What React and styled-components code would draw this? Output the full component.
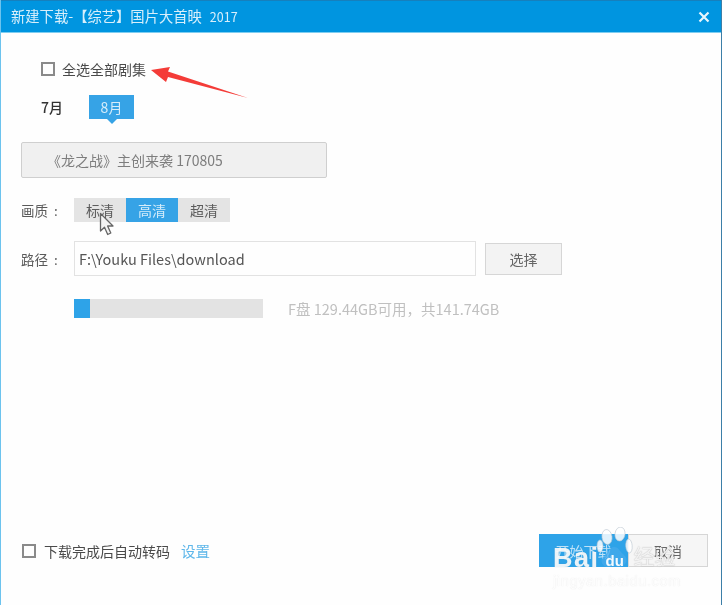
import React from "react";
import styled, { createGlobalStyle } from "styled-components";

const Global = createGlobalStyle`
  html, body { margin: 0; padding: 0; background: #fff; }
  body { font-family: "Noto Sans CJK SC", "Noto Sans", sans-serif; line-height: 18px; }
  * { box-sizing: border-box; }
`;
const Win = styled.div`
  position: relative; width: 722px; height: 605px; background: #fefefe;
  display: flex; flex-direction: column; overflow: hidden;
  border-left: 1px solid #6cc3ee; border-right: 1px solid #3c7fa8;
`;
const TitleBar = styled.div`
  height: 33px; flex: none; margin: 0 -1px; padding: 0 12px 0 11px; display: flex; align-items: center; justify-content: space-between;
  background: #0095e0; border-top: 1px solid #1680bd; border-bottom: 1px solid #7fcdf0;
  color: #d8effb; font-size: 14.3px; filter: blur(.4px);
`;
const Year = styled.span` margin-left: 8px; font-size: 12.5px; `;
const Close = styled.svg` width: 12px; height: 12px; `;
const Body = styled.div`
  flex: 1; display: flex; flex-direction: column; padding: 27px 13px 0 20px; filter: blur(.45px);
`;
const CheckRow = styled.div`
  display: flex; align-items: center; color: #4a4a4a; font-size: 14px; margin-left: ${p => p.$left}px;
`;
const Box = styled.span`
  width: 14px; height: 14px; border: 2px solid #8a8a8a; margin-right: ${p => p.$gap}px; flex: none;
`;
const Months = styled.div` display: flex; align-items: center; margin: 17px 0 0 20px; height: 24px; `;
const Month = styled.span` width: 48px; font-size: 14px; color: #333; font-weight: 500; `;
const MonthTab = styled.span`
  position: relative; width: 45px; height: 24px; background: #36a3e6; color: #d5ecfa; font-size: 14px;
  display: flex; align-items: center; justify-content: center;
  &::after { content: ""; position: absolute; left: 18px; bottom: -5px; border: 5px solid transparent; border-bottom: 0; border-top-color: #36a3e6; }
`;
const Episode = styled.div`
  width: 306px; height: 36px; margin-top: 23px; padding-left: 25px; display: flex; align-items: center;
  background: #f0f0f0; border: 1px solid #cfcfcf; border-radius: 2px; color: #7d7d7d; font-size: 14px;
`;
const Row = styled.div` display: flex; align-items: center; margin-top: ${p => p.$top}px; `;
const Label = styled.span` width: 53px; flex: none; display: flex; color: #5a5a5a; font-size: 13.5px; `;
const Colon = styled.span` margin-left: 6px; `;
const Seg = styled.span`
  width: 52px; height: 24px; display: flex; align-items: center; justify-content: center; font-size: 14px;
  background: ${p => p.$on ? "#36a3e6" : "#e4e4e4"}; color: ${p => p.$on ? "#d5ecfa" : "#5c5c5c"};
`;
const PathInput = styled.div`
  width: 402px; height: 35px; padding-left: 4px; display: flex; align-items: center;
  border: 1px solid #e2e2e2; color: #555; font-size: 14.5px;
`;
const Choose = styled.div`
  width: 77px; height: 32px; margin-left: 9px; display: flex; align-items: center; justify-content: center;
  background: #f3f3f3; border: 1px solid #d6d6d6; color: #666; font-size: 14px;
`;
const Track = styled.div` width: 189px; height: 19px; margin-left: 53px; background: #e3e3e3; `;
const Fill = styled.div` height: 100%; background: #2ea3e8; `;
const Disk = styled.span` margin-left: 25px; color: #c0c0c0; font-size: 14.5px; `;
const Spacer = styled.div` flex: 1; `;
const Footer = styled.div` display: flex; align-items: center; justify-content: space-between; margin-bottom: 38px; `;
const Link = styled.span` margin-left: 11px; color: #5fb7ea; font-size: 14.5px; `;
const Actions = styled.div` display: flex; `;
const Primary = styled.div`
  width: 89px; height: 33px; display: flex; align-items: center; justify-content: center;
  background: #2ea3e8; color: #bfe2f8; font-size: 14px;
`;
const Secondary = styled.div`
  width: 80px; height: 33px; display: flex; align-items: center; justify-content: center;
  background: #f6f6f6; border: 1px solid #d6d6d6; color: #666; font-size: 14px;
`;
const Arrow = styled.svg` position: absolute; left: 144px; top: 58px; width: 110px; height: 45px; `;
const Cursor = styled.svg` position: absolute; left: 98px; top: 212px; width: 16px; height: 24px; filter: blur(.3px); `;
const Mark = styled.div`
  position: absolute; left: 552px; top: 527px; width: 135px; color: rgba(255,255,255,.88);
  filter: blur(.4px); font-family: "Liberation Sans", "Noto Sans CJK SC", sans-serif;
`;
const MarkTop = styled.div` display: flex; align-items: flex-end; height: 41px; `;
const Bai = styled.span`
  font-size: 27px; font-weight: 700; line-height: 20px; letter-spacing: 1.5px;
  text-shadow: 0 0 1px rgba(150,150,150,.45);
`;
const Paw = styled.svg` width: 37px; height: 41px; margin-left: -4px; flex: none; `;
const Du = styled.span` font-size: 15px; font-weight: 700; line-height: 14px; margin: 0 11px 0 -27px; width: 17px; color: rgba(255,255,255,.95); `;
const Jing = styled.span`
  font-size: 21px; line-height: 23px; white-space: nowrap; color: rgba(255,255,255,.85);
  text-shadow: 0 0 1px rgba(130,130,130,.75);
`;
const MarkSub = styled.div`
  margin-top: 5px; font-size: 14.5px; line-height: 17px; letter-spacing: .65px; color: rgba(255,255,255,.9);
  text-shadow: 0 0 1px rgba(170,170,170,.3); white-space: nowrap;
`;

export default function App() {
  return (
    <Win>
      <Global />
      <TitleBar>
        <span>新建下载-【综艺】国片大首映<Year>2017</Year></span>
        <Close viewBox="0 0 12 12"><path d="M1.5 1.5 10.5 10.5M10.5 1.5 1.5 10.5" stroke="#e8f6fd" strokeWidth="2.2" /></Close>
      </TitleBar>
      <Body>
        <CheckRow $left={20}><Box $gap={7} />全选全部剧集</CheckRow>
        <Months><Month>7月</Month><MonthTab>8月</MonthTab></Months>
        <Episode>《龙之战》主创来袭 170805</Episode>
        <Row $top={20}>
          <Label>画质<Colon>:</Colon></Label>
          <Seg>标清</Seg><Seg $on>高清</Seg><Seg>超清</Seg>
        </Row>
        <Row $top={19}>
          <Label>路径<Colon>:</Colon></Label>
          <PathInput>F:\Youku Files\download</PathInput>
          <Choose>选择</Choose>
        </Row>
        <Row $top={23}>
          <Track><Fill style={{ width: `${(16 / 189) * 100}%` }} /></Track>
          <Disk>F盘 129.44GB可用，共141.74GB</Disk>
        </Row>
        <Spacer />
        <Footer>
          <CheckRow $left={1}><Box $gap={8} />下载完成后自动转码<Link>设置</Link></CheckRow>
          <Actions><Primary>开始下载</Primary><Secondary>取消</Secondary></Actions>
        </Footer>
      </Body>
      <Arrow viewBox="0 0 110 45">
        <path d="M6 12 25 9 23 13.5 103 40 23 19 21 24Z" fill="#f43c38" />
      </Arrow>
      <Cursor viewBox="0 0 16 24">
        <path d="M1.5 1.5V19L5.5 15.2 8.7 22.5 11.8 21 8.6 14H14Z" fill="#f4f4f4" stroke="#666" strokeWidth="1.3" strokeLinejoin="round" />
      </Cursor>
      <Mark>
        <MarkTop>
          <Bai>Bai</Bai>
          <Paw viewBox="0 0 37 41">
            <g fill="rgba(255,255,255,.85)" stroke="rgba(190,200,210,.8)" strokeWidth=".8">
              <ellipse cx="11" cy="10" rx="5" ry="7.5" transform="rotate(-8 11 10)" />
              <ellipse cx="24" cy="7" rx="5" ry="7" transform="rotate(8 24 7)" />
              <ellipse cx="33" cy="19" rx="3.2" ry="7" transform="rotate(-4 33 19)" />
              <ellipse cx="4" cy="19" rx="3" ry="6" />
              <path d="M18 20c5 0 6 5 10 8 5 4 2 12-5 12-4 0-6-1-9 0-8 1-11-7-6-11 5-3 5-9 10-9Z" fill="rgba(70,170,235,.75)" stroke="none" />
            </g>
          </Paw>
          <Du>du</Du>
          <Jing>经验</Jing>
        </MarkTop>
        <MarkSub>jingyan.baidu.com</MarkSub>
      </Mark>
    </Win>
  );
}
